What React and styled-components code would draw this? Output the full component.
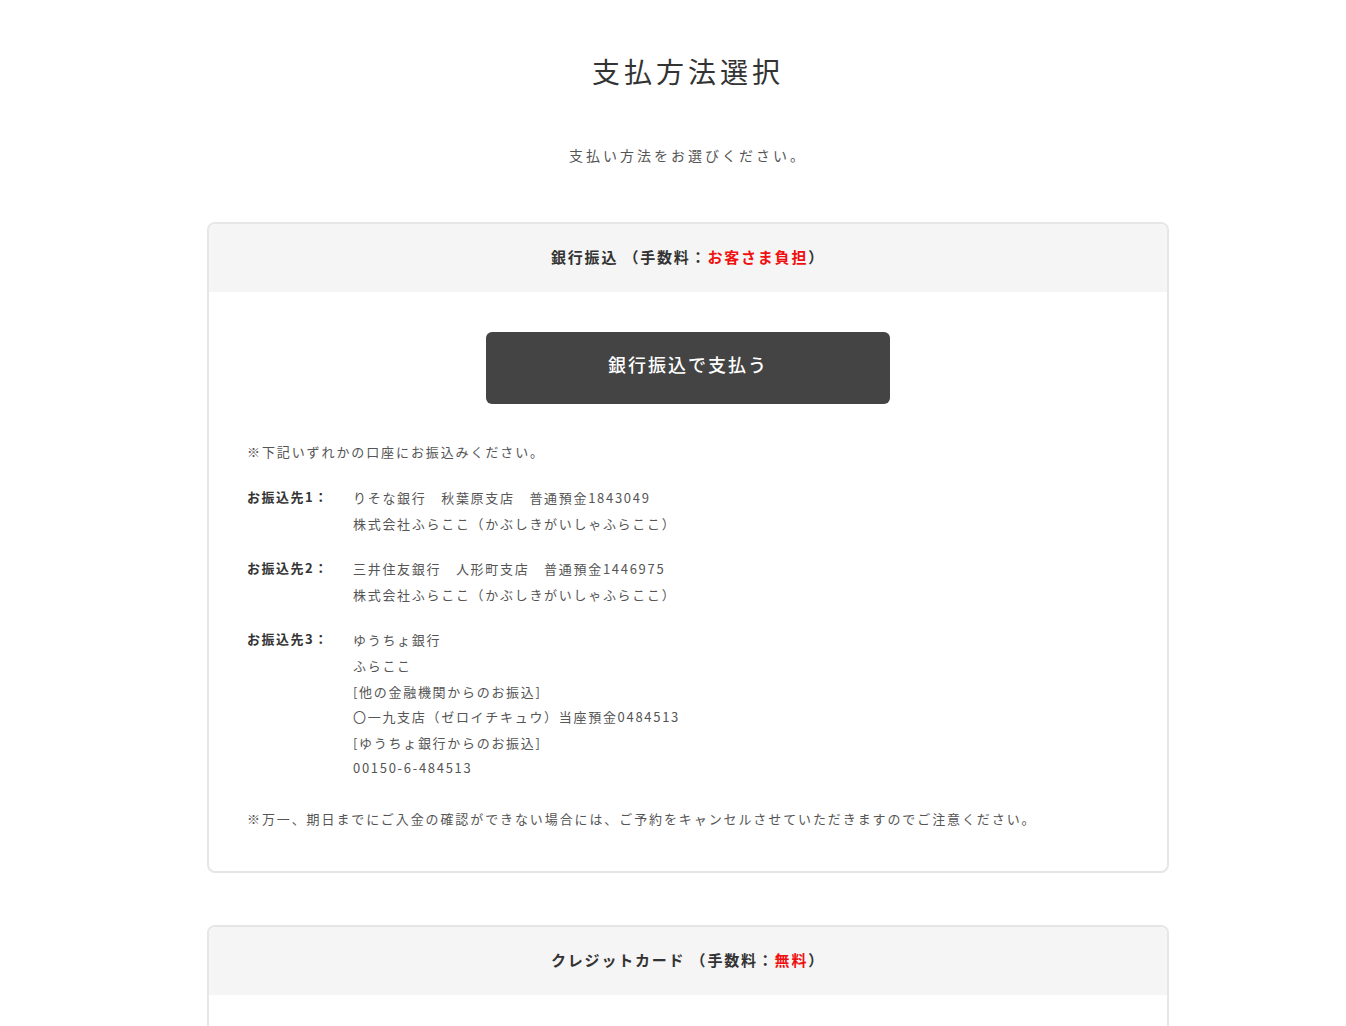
import React from "react";
import styled, { createGlobalStyle } from "styled-components";

const GlobalStyle = createGlobalStyle`
  html, body {
    margin: 0;
    padding: 0;
    background: #fff;
  }
  body {
    font-family: "Noto Sans CJK JP", "Noto Sans", sans-serif;
    color: #333;
  }
`;

const Page = styled.div`
  padding: 0 0 0 30px;
`;

const Inner = styled.div`
  width: 962px;
  margin: 0 auto;
`;

const Title = styled.h1`
  margin: 0;
  padding-top: 49px;
  text-align: center;
  font-size: 28px;
  font-weight: 400;
  letter-spacing: 4px;
  line-height: 44px;
  color: #333;
`;

const Lead = styled.p`
  margin: 52px 0 0;
  text-align: center;
  font-size: 14px;
  letter-spacing: 3px;
  line-height: 20px;
  color: #555;
`;

const Card = styled.section`
  margin-top: ${(p) => p.gap}px;
  border: 2px solid #e6e6e6;
  border-radius: 8px;
  overflow: hidden;
  background: #fff;
`;

const CardHeader = styled.div`
  display: flex;
  align-items: center;
  justify-content: center;
  height: 68px;
  padding-bottom: 3px;
  box-sizing: border-box;
  background: #f5f5f5;
  font-size: 15px;
  font-weight: 700;
  letter-spacing: 1.8px;
  color: #333;
`;

const Red = styled.span`
  color: #f01010;
`;

const CardBody = styled.div`
  padding: 40px 38px 39px;
  min-height: ${(p) => p.minHeight || 0}px;
`;

const PayButton = styled.button`
  display: block;
  width: 404px;
  height: 72px;
  margin: 0 auto;
  padding: 0 0 8px;
  border: none;
  border-radius: 6px;
  background: #444;
  color: #fff;
  font-family: inherit;
  font-size: 18px;
  font-weight: 500;
  letter-spacing: 2px;
  cursor: pointer;
`;

const Note = styled.p`
  margin: ${(p) => p.top}px 0 0;
  font-size: 13px;
  letter-spacing: 1.9px;
  line-height: 26px;
  color: #555;
`;

const AccountList = styled.dl`
  margin: 20px 0 0;
  display: flex;
  flex-direction: column;
  gap: 20px;
`;

const AccountRow = styled.div`
  display: grid;
  grid-template-columns: 106px 1fr;
`;

const Label = styled.dt`
  font-size: 13px;
  font-weight: 700;
  letter-spacing: 1.5px;
  line-height: 24px;
  color: #333;
`;

const Value = styled.dd`
  margin: 0;
  font-size: 13px;
  letter-spacing: 1.7px;
  line-height: 25.6px;
  color: #555;
`;

const accounts = [
  {
    label: "お振込先1：",
    lines: ["りそな銀行　秋葉原支店　普通預金1843049", "株式会社ふらここ（かぶしきがいしゃふらここ）"],
  },
  {
    label: "お振込先2：",
    lines: ["三井住友銀行　人形町支店　普通預金1446975", "株式会社ふらここ（かぶしきがいしゃふらここ）"],
  },
  {
    label: "お振込先3：",
    lines: [
      "ゆうちょ銀行",
      "ふらここ",
      "[他の金融機関からのお振込]",
      "〇一九支店（ゼロイチキュウ）当座預金0484513",
      "[ゆうちょ銀行からのお振込]",
      "00150-6-484513",
    ],
  },
];

const App = () => {
  return (
    <Page>
      <GlobalStyle />
      <Inner>
        <Title>支払方法選択</Title>
        <Lead>支払い方法をお選びください。</Lead>

        <Card gap={57}>
          <CardHeader>
            銀行振込 （手数料：<Red>お客さま負担</Red>）
          </CardHeader>
          <CardBody>
            <PayButton>銀行振込で支払う</PayButton>
            <Note top={35}>※下記いずれかの口座にお振込みください。</Note>
            <AccountList>
              {accounts.map((a) => (
                <AccountRow key={a.label}>
                  <Label>{a.label}</Label>
                  <Value>
                    {a.lines.map((l) => (
                      <div key={l}>{l}</div>
                    ))}
                  </Value>
                </AccountRow>
              ))}
            </AccountList>
            <Note top={25}>
              ※万一、期日までにご入金の確認ができない場合には、ご予約をキャンセルさせていただきますのでご注意ください。
            </Note>
          </CardBody>
        </Card>

        <Card gap={52}>
          <CardHeader>
            クレジットカード （手数料：<Red>無料</Red>）
          </CardHeader>
          <CardBody minHeight={200} />
        </Card>
      </Inner>
    </Page>
  );
};

export default App;
